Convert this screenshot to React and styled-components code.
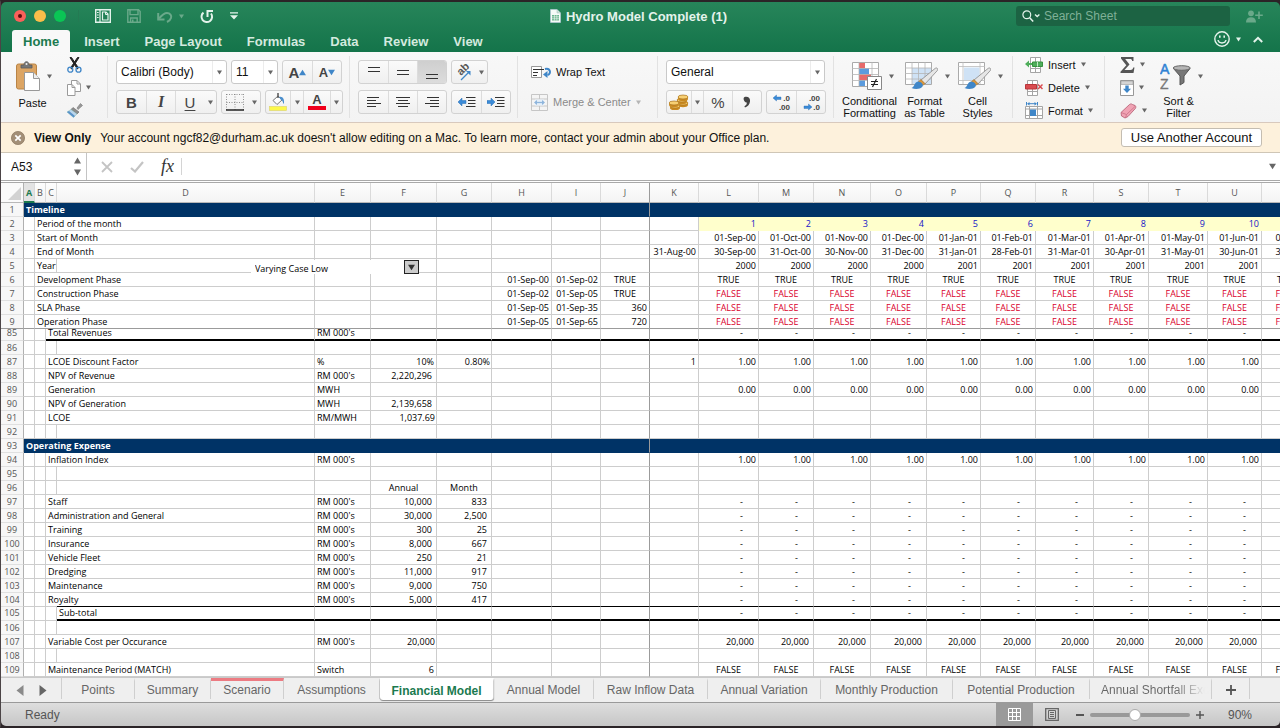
import styled, { createGlobalStyle, css } from "styled-components";

const GlobalStyle = createGlobalStyle`
    * {
        box-sizing: border-box;
    }
    body {
        margin: 0;
        background: #2b2427;
        font-family: "Liberation Sans", Arial, sans-serif;
        font-size: 12px;
        color: #111;
    }
    button, input, select {
        font-family: inherit;
        margin: 0;
        padding: 0;
    }
    button {
        border: none;
        background: none;
        color: inherit;
    }
`;

/* ---------- window ---------- */

const Window = styled.div`
    min-height: 100vh;
    display: flex;
    flex-direction: column;
    border-top: 2px solid #2b2427;
    border-left: 1px solid #4b4446;
    border-bottom: 2px solid #2b2427;
    overflow: hidden;
`;

const Header = styled.header`
    background: linear-gradient(#27855a, #14744a);
    border-radius: 5px 5px 0 0;
    color: #e4f3eb;
`;

const TitleBar = styled.div`
    display: grid;
    grid-template-columns: 1fr auto 1fr;
    align-items: center;
    height: 28px;
    padding: 0 17px 0 13px;
`;

const Tools = styled.div`
    display: flex;
    align-items: center;
    gap: 16px;
`;

const Lights = styled.div`
    display: flex;
    gap: 8px;
    padding-right: 12px;
    border-right: 1px solid #247a53;
`;

const Light = styled.button`
    display: flex;
    align-items: center;
    justify-content: center;
    width: 12px;
    height: 12px;
    border-radius: 50%;
    background: ${(p) => p.$color};
    &::after {
        content: "";
        width: 4px;
        height: 4px;
        border-radius: 50%;
        background: ${(p) => p.$dot || "transparent"};
    }
`;

const ToolButton = styled.button`
    display: flex;
    align-items: center;
    gap: 6px;
    color: ${(p) => (p.$off ? "#6aa98a" : "#e4f3eb")};
`;

const Title = styled.h1`
    display: flex;
    align-items: center;
    gap: 5px;
    margin: 0;
    font-size: 13px;
    font-weight: bold;
`;

const TitleEnd = styled.div`
    display: flex;
    align-items: center;
    justify-content: flex-end;
    gap: 16px;
`;

const Search = styled.label`
    display: flex;
    align-items: center;
    gap: 4px;
    width: 214px;
    height: 20px;
    padding: 0 6px;
    border-radius: 3px;
    background: #1c6343;
`;

const SearchInput = styled.input`
    flex: 1;
    min-width: 0;
    border: none;
    outline: none;
    background: transparent;
    color: #fff;
    font-size: 12px;
    &::placeholder {
        color: #7fb097;
        opacity: 1;
    }
`;

const TabRow = styled.nav`
    display: flex;
    align-items: flex-end;
    gap: 3px;
    height: 22px;
    padding: 0 17px 0 11px;
`;

const RibbonTab = styled.button`
    height: 22px;
    padding: 0 11px;
    border-radius: 3px 3px 0 0;
    font-size: 13px;
    font-weight: bold;
    background: ${(p) => (p.$active ? "#f8f8f8" : "transparent")};
    color: ${(p) => (p.$active ? "#1b7a4f" : "#d4eadf")};
`;

const TabRowEnd = styled.div`
    display: flex;
    align-items: center;
    gap: 12px;
    height: 22px;
    margin-left: auto;
    padding-bottom: 4px;
`;

/* ---------- ribbon ---------- */

const Ribbon = styled.section`
    display: flex;
    height: 71px;
    padding: 4px 0;
    background: linear-gradient(#f8f8f8, #f3f3f3);
    border-bottom: 1px solid #d8c9bd;
    font-size: 11px;
    color: #111;
`;

const Group = styled.div`
    flex: none;
    display: flex;
    gap: ${(p) => p.$gap || 0}px;
    width: ${(p) => p.$width}px;
    padding: 4px 0 0 ${(p) => p.$pad ?? 8}px;
    border-right: 1px solid ${(p) => (p.$last ? "transparent" : "#e2e2e2")};
`;

const Stack = styled.div`
    display: flex;
    flex-direction: column;
    gap: 6px;
`;

const Line = styled.div`
    display: flex;
    gap: 4px;
    height: 24px;
`;

const SelectBox = styled.div`
    display: grid;
    align-items: center;
    width: ${(p) => p.$width}px;
    height: 24px;
    border: 1px solid #c9c9c9;
    border-radius: 3px;
    background: #fff;
`;

const Select = styled.select`
    grid-area: 1 / 1;
    width: 100%;
    height: 22px;
    padding-left: 4px;
    border: none;
    appearance: none;
    background: transparent;
    color: #111;
    font-size: 12px;
`;

const SelectArrow = styled.span`
    grid-area: 1 / 1;
    justify-self: end;
    display: flex;
    align-items: center;
    justify-content: center;
    width: 14px;
    height: 22px;
    border-left: 1px solid #ececec;
    pointer-events: none;
`;

const Segments = styled.div`
    display: flex;
    height: 24px;
    border: 1px solid #d2d2d2;
    border-radius: 3px;
    overflow: hidden;
    background: linear-gradient(#fafafa, #efefef);
`;

const Segment = styled.button`
    display: flex;
    align-items: center;
    justify-content: center;
    width: ${(p) => p.$width || 29}px;
    background: ${(p) => (p.$pressed ? "linear-gradient(#cfcfcf, #dcdcdc)" : "transparent")};
    border-left: 1px solid ${(p) => (p.$joined ? "transparent" : "#dcdcdc")};
    color: #444;
    font-size: ${(p) => p.$size || 15}px;
    &:first-child {
        border-left: none;
    }
`;

const Glyph = styled.span`
    font-weight: ${(p) => (p.$bold ? "bold" : "normal")};
    font-style: ${(p) => (p.$italic ? "italic" : "normal")};
    font-family: ${(p) => (p.$serif ? '"Liberation Serif", serif' : "inherit")};
    text-decoration: ${(p) => (p.$underline ? "underline" : "none")};
    text-underline-offset: 2px;
`;

const BigButton = styled.button`
    flex: none;
    display: flex;
    flex-direction: column;
    align-items: center;
    justify-content: space-between;
    height: 59px;
    font-size: 11px;
    line-height: 12px;
`;

const BigIcon = styled.span`
    display: flex;
    align-items: center;
    gap: 7px;
    height: 32px;
    padding-left: ${(p) => p.$inset ?? 6}px;
`;

const BigLabel = styled.span`
    display: flex;
    align-items: center;
    height: 24px;
    padding-bottom: ${(p) => (p.$single ? 8 : 0)}px;
`;

const SmallButton = styled.button`
    flex: none;
    display: flex;
    align-items: center;
    gap: 5px;
    height: ${(p) => p.$height || 23}px;
    font-size: 11px;
    color: ${(p) => (p.$off ? "#8b8b8b" : "#111")};
`;

const SmallStack = styled.div`
    display: flex;
    flex-direction: column;
    margin-top: -7px;
`;

/* ---------- banner and formula bar ---------- */

const Banner = styled.div`
    display: flex;
    align-items: center;
    gap: 9px;
    height: 30px;
    padding: 0 18px 0 10px;
    background: #fdf1dc;
    border-bottom: 1px solid #cfc6b6;
    font-size: 12px;
    white-space: nowrap;
`;

const BannerButton = styled.button`
    width: 141px;
    height: 19px;
    margin-left: auto;
    border: 1px solid #c4bdb1;
    border-radius: 3px;
    background: #fff;
    font-size: 13px;
    line-height: 15px;
`;

const FormulaBar = styled.div`
    display: flex;
    align-items: center;
    height: 27px;
    padding-right: 4px;
    background: #fff;
`;

const NameBox = styled.div`
    display: flex;
    align-items: center;
    width: 86px;
    height: 27px;
    padding: 0 5px 0 10px;
    border-right: 1px solid #c4c4c4;
`;

const NameInput = styled.input`
    flex: 1;
    min-width: 0;
    border: none;
    outline: none;
    color: #111;
    font-size: 12px;
`;

const FormulaTools = styled.div`
    display: flex;
    align-items: center;
    gap: 17px;
    width: 94px;
    padding-left: 14px;
`;

const Fx = styled.span`
    font-family: "Liberation Serif", serif;
    font-style: italic;
    font-size: 18px;
    color: #333;
`;

const FormulaInput = styled.input`
    flex: 1;
    height: 17px;
    border: none;
    border-left: 1px solid #d4d4d4;
    outline: none;
`;

/* ---------- sheet ---------- */

const SheetArea = styled.main`
    position: relative;
    flex: 1;
    overflow: hidden;
    background: #fff;
    border-top: 3px double #a9a9a9;
`;

const Grid = styled.table`
    table-layout: fixed;
    width: 0;
    border-collapse: separate;
    border-spacing: 0;
    font-family: "Open Sans", "Noto Sans", sans-serif;
    font-size: 9px;
`;

const Col = styled.col`
    width: ${(p) => p.$width}px;
`;

const ColHead = styled.th`
    height: 20px;
    padding: 0;
    font-weight: ${(p) => (p.$active ? "bold" : "normal")};
    color: ${(p) => (p.$active ? "#1b7a4f" : "#555")};
    background: ${(p) => (p.$active ? "#e3e3e3" : "linear-gradient(#fdfdfd, #f4f4f4)")};
    border-right: 1px solid ${(p) => (p.$freeze ? "#9b9b9b" : "#dadada")};
    border-bottom: ${(p) => (p.$active ? "2px solid #1b7a4f" : "1px solid #b8b8b8")};
`;

const Corner = styled.th`
    height: 20px;
    padding: 0 2px 2px 0;
    text-align: right;
    vertical-align: bottom;
    line-height: 0;
    background: #fafafa;
    border-right: 1px solid #b0b0b0;
    border-bottom: 1px solid #b8b8b8;
`;

const lineStyles = {
    none: "none",
    grid: "1px solid #cdcdcd",
    freeze: "1px solid #9b9b9b",
    thin: "1px solid #000",
    thick: "2px solid #000",
    navy: "1px solid #003366",
    yellow: "1px solid #ffffcc",
};

const RowHead = styled.th`
    padding: 0;
    font-weight: normal;
    vertical-align: top;
    line-height: ${(p) => p.$text}px;
    color: #555;
    background: #f7f7f7;
    border-right: 1px solid #b0b0b0;
    border-bottom: 1px solid ${(p) => (p.$freeze ? "#9b9b9b" : "#e0e0e0")};
`;

const Cell = styled.td`
    height: ${(p) => p.$height}px;
    padding: 0 ${(p) => p.$pad ?? 2}px 0 2px;
    vertical-align: top;
    line-height: ${(p) => p.$text}px;
    text-align: ${(p) => p.$align || "left"};
    white-space: nowrap;
    color: ${(p) => p.$color || "#000"};
    background: ${(p) => p.$fill || "#fff"};
    border-right: ${(p) => lineStyles[p.$side || "grid"]};
    border-bottom: ${(p) => lineStyles[p.$line || "grid"]};
    ${(p) =>
        p.$bold &&
        css`
            font-weight: bold;
        `}
`;

const CaseBox = styled.div`
    position: absolute;
    left: 250px;
    top: 77px;
    display: flex;
    width: 168px;
    height: 14px;
    background: #fff;
`;

const CaseSelect = styled.select`
    flex: 1;
    height: 14px;
    padding-left: 4px;
    padding-top: 3px;
    border: none;
    appearance: none;
    background: #fff;
    color: #000;
    font-family: "Open Sans", "Noto Sans", sans-serif;
    font-size: 9px;
    line-height: 11px;
`;

const CaseArrow = styled.span`
    display: flex;
    align-items: center;
    justify-content: center;
    width: 15px;
    height: 14px;
    border: 1px solid #222;
    background: #ccc;
    pointer-events: none;
`;

/* ---------- sheet tabs and status ---------- */

const SheetTabs = styled.nav`
    display: flex;
    height: 26px;
    background: #efefef;
    border-top: 1px solid #c9c9c9;
    border-bottom: 1px solid #9a9a9a;
`;

const TabArrows = styled.div`
    flex: none;
    display: flex;
    align-items: center;
    gap: 15px;
    width: 61px;
    height: 21px;
    padding: 3px 0 0 15px;
    border-right: 1px solid #cfcfcf;
`;

const SheetTab = styled.button`
    flex: none;
    width: ${(p) => p.$width}px;
    height: 21px;
    border-right: 1px solid #cfcfcf;
    border-top: 3px solid ${(p) => p.$mark || "transparent"};
    font-size: 12px;
    line-height: 16px;
    color: #666;
    white-space: nowrap;
    ${(p) =>
        p.$active &&
        css`
            height: 22px;
            background: #fff;
            color: #1b7a4f;
            font-weight: bold;
            border-radius: 0 0 3px 3px;
            box-shadow: 0 1px 1px #888;
        `}
    ${(p) =>
        p.$fade &&
        css`
            padding-left: 11px;
            text-align: left;
            overflow: hidden;
            background: linear-gradient(90deg, #666 70%, #eee 95%);
            background-clip: text;
            color: transparent;
        `}
`;

const AddTab = styled.button`
    display: flex;
    align-items: center;
    justify-content: center;
    width: 38px;
    height: 21px;
    padding-top: 3px;
    border-right: 1px solid #cfcfcf;
`;

const Status = styled.footer`
    display: flex;
    align-items: center;
    height: 23px;
    padding: 0 28px 0 24px;
    background: linear-gradient(#dedede, #c6c6c6);
    border-radius: 0 0 5px 5px;
    font-size: 12px;
    color: #555;
`;

const StatusEnd = styled.div`
    display: flex;
    align-items: center;
    height: 23px;
    margin-left: auto;
`;

const ViewButton = styled.button`
    display: flex;
    align-items: center;
    justify-content: center;
    width: 37px;
    height: 23px;
    background: ${(p) => (p.$active ? "#9a9a9a" : "transparent")};
`;

const ZoomButton = styled.button`
    display: flex;
    padding: 0 6px;
`;

const ZoomSlider = styled.input`
    width: 100px;
    height: 14px;
    appearance: none;
    background: transparent;
    &::-webkit-slider-runnable-track {
        height: 4px;
        border-radius: 2px;
        background: #999;
    }
    &::-webkit-slider-thumb {
        appearance: none;
        width: 12px;
        height: 12px;
        margin-top: -4px;
        border-radius: 50%;
        border: 1px solid #aaa;
        background: #fff;
    }
`;

const ZoomValue = styled.span`
    width: 42px;
    text-align: right;
`;

/* ---------- icons ---------- */

const Caret = ({ color = "#666", size = 5, up }) => (
    <svg width={size} height={size} viewBox="0 0 10 10">
        <path d={up ? "M0 9h10L5 1z" : "M0 1h10L5 9z"} fill={color} />
    </svg>
);

const SidebarIcon = () => (
    <svg width="16" height="14" viewBox="0 0 16 14" fill="none" stroke="currentColor">
        <path d="M.7.7h14.6v12.6H.7z" strokeWidth="1.4" />
        <path d="M5 1v12" strokeWidth="1.2" />
        <path d="M2 3.5h1.7M2 6h1.7M2 8.5h1.7" strokeWidth="1" />
        <path d="M7.5 3h3.500l2 2V11H7.5z" strokeWidth="1.2" />
        <path d="M10.500 3v2.500h2.500" strokeWidth="1" />
    </svg>
);

const SaveIcon = () => (
    <svg width="14" height="14" viewBox="0 0 14 14" fill="none" stroke="currentColor" strokeWidth="1.4">
        <path d="M.8.8h10.7l1.7 1.7v10.7H.8z" />
        <path d="M3 1v4.6h8V1M3.6 13V9h6.6v4" />
        <path d="M5 10.5h1.5V13H5z" fill="currentColor" stroke="none" />
    </svg>
);

const UndoIcon = () => (
    <svg width="16" height="13" viewBox="0 0 16 13" fill="none" stroke="currentColor" strokeWidth="2">
        <path d="M2 8.5C5 5 7 3 10 3c3 0 5 2.5 4 5-.5 1.8-2 3-4 4" />
        <path d="M1.200 3v6.400h6.300" />
    </svg>
);

const RedoIcon = () => (
    <svg width="14" height="15" viewBox="0 0 14 15" fill="none" stroke="currentColor" strokeWidth="2">
        <path d="M3.500 3.600A5.300 5.300 0 1 0 11 4.500" />
        <path d="M7.500 8V1.900H13" />
    </svg>
);

const CustomizeIcon = () => (
    <svg width="8" height="8" viewBox="0 0 8 8" fill="currentColor">
        <path d="M0 .3h8v1.300H0zM0 3.300h8L4 7.500z" />
    </svg>
);

const DocIcon = () => (
    <svg width="11" height="14" viewBox="0 0 11 14">
        <path d="M.5.5h6.500l3.500 3.500v9.500H.5z" fill="#f5faf7" stroke="#bcd" strokeWidth=".6" />
        <path d="M7 .5V4h3.500" fill="#cfe3d8" stroke="#9bb" strokeWidth=".5" />
        <path d="M2 6h7v5.500H2z" fill="#6cb58f" />
        <path d="M2 7.800h7M2 9.700h7M4.500 6v5.500M6.800 6v5.500" stroke="#fff" strokeWidth=".5" />
    </svg>
);

const SearchIcon = () => (
    <svg width="18" height="12" viewBox="0 0 18 12" fill="none" stroke="#e4f3eb">
        <circle cx="4.800" cy="4.800" r="3.900" strokeWidth="1.200" />
        <path d="M7.700 7.700l3.500 3.800" strokeWidth="1.500" />
        <path d="M13 4.500l2.200 2 2.200-2" strokeWidth="1.400" />
    </svg>
);

const ShareIcon = () => (
    <svg width="17" height="13" viewBox="0 0 17 13" fill="#6aa98a">
        <circle cx="5" cy="3.300" r="2.900" />
        <path d="M0 12.500C0 9 1.800 7.200 5 7.200s5 1.800 5 5.300z" />
        <path d="M12.200 1.500h1.600v3h3v1.600h-3v3h-1.600v-3h-3V4.500h3z" />
    </svg>
);

const SmileIcon = () => (
    <svg width="16" height="16" viewBox="0 0 16 16" fill="none" stroke="#e4f3eb" strokeWidth="1.400">
        <circle cx="8" cy="8" r="7.200" />
        <path d="M4 9c.7 4 7.300 4 8 0" strokeWidth="1.400" />
        <path d="M5.800 4.500v2.200M10.200 4.500v2.200" strokeWidth="1.600" />
    </svg>
);

const CollapseIcon = () => (
    <svg width="10" height="7" viewBox="0 0 10 7" fill="none" stroke="#e4f3eb" strokeWidth="2">
        <path d="M.8 6L5 1.800 9.200 6" />
    </svg>
);

const PasteIcon = () => (
    <svg width="24" height="30" viewBox="0 0 24 30">
        <rect x=".5" y="3" width="20" height="25" rx="2" fill="#dca564" stroke="#b98446" />
        <path d="M5 7V4h3c0-4.500 5-4.500 5 0h3v3z" fill="#777" stroke="#5a5a5a" strokeWidth=".8" />
        <circle cx="10.500" cy="3" r="1" fill="#f2f2f2" />
        <path d="M8.500 11.500h9l6 6v12h-15z" fill="#fff" stroke="#999" />
        <path d="M17.500 11.500v6h6" fill="#eee" stroke="#999" />
    </svg>
);

const CutIcon = () => (
    <svg width="15" height="16" viewBox="0 0 15 16" fill="none">
        <path d="M3 .5l1.500 0L11.500 11l-1.200 1z" fill="#222" stroke="#222" />
        <path d="M12 .5l-1.500 0L3.500 11l1.200 1z" fill="#222" stroke="#222" />
        <circle cx="3.300" cy="12.700" r="2.500" stroke="#3f86c8" strokeWidth="1.300" />
        <circle cx="11.500" cy="12.700" r="2.500" stroke="#3f86c8" strokeWidth="1.300" />
    </svg>
);

const CopyIcon = () => (
    <svg width="14" height="16" viewBox="0 0 14 16" fill="#fff" stroke="#9a9a9a">
        <path d="M4.500 .5h5.500l3.500 3.500v7.500h-9z" />
        <path d="M10 .5v3.500h3.500" fill="none" />
        <path d="M.5 4.500h4.500l3 3v8H.5z" />
        <path d="M5 4.500v3h3" fill="none" />
    </svg>
);

const BrushIcon = () => (
    <svg width="16" height="15" viewBox="0 0 16 15">
        <path d="M10 5l3.500-4.500 2 2L11 6.500z" fill="#999" stroke="#777" strokeWidth=".6" />
        <path d="M6 4.500L12 9l-2 2-6-4.500z" fill="#8d8d8d" stroke="#666" strokeWidth=".6" />
        <path d="M4 6.500L10 11l-3.500 3.500L0 9z" fill="#bcd6ee" stroke="#7ba" strokeWidth=".4" />
        <path d="M0 9l6.500 5.500 1.500-1.500L2 8z" fill="#5a93c8" />
    </svg>
);

const BordersIcon = () => (
    <svg width="18" height="17" viewBox="0 0 18 17" fill="none" stroke="#777">
        <path d="M.5 .5h17M.5 8.500h17M.5 0v16M9 0v16M17.500 0v16" strokeDasharray="1 1.500" strokeWidth=".8" />
        <path d="M0 16h18" stroke="#222" strokeWidth="1.400" />
    </svg>
);

const FillIcon = () => (
    <svg width="18" height="18" viewBox="0 0 18 18">
        <path d="M4 7.500L9 3l4 4-5 4.500z" fill="#fff" stroke="#777" />
        <path d="M9 0v5" stroke="#555" strokeWidth="1.500" />
        <path d="M10 4c4-1 5.500 2 5 7-1.500-1-1-4-3-4z" fill="#4b8fcd" />
        <rect x=".5" y="13.500" width="17" height="4" fill="#fcf84a" stroke="#ddd36a" strokeWidth=".6" />
    </svg>
);

const FontColorIcon = () => (
    <svg width="18" height="18" viewBox="0 0 18 18">
        <text x="9" y="11" textAnchor="middle" fontSize="13" fontWeight="bold" fill="#444">A</text>
        <rect x="0" y="13" width="18" height="4" fill="#f0001c" />
    </svg>
);

const AlignIcon = ({ lines, top = 3 }) => (
    <svg width="16" height="20" viewBox="0 0 16 20" stroke="#333" strokeWidth="1">
        {lines.map(([x, w], i) => (
            <path key={i} d={`M${x} ${top + i * 3 + 0.5}h${w}`} />
        ))}
    </svg>
);

const ValignIcon = ({ top }) => (
    <svg width="16" height="20" viewBox="0 0 16 20" stroke="#333">
        <path d={`M2 ${top}h12M2 ${top + 4}h12`} />
    </svg>
);

const AngleIcon = () => (
    <svg width="20" height="20" viewBox="0 0 20 20">
        <text x="0" y="0" fontSize="11" fontWeight="bold" fill="#555" transform="translate(8 14) rotate(-45)">ab</text>
        <path d="M8 18l8-8" stroke="#3f86c8" strokeWidth="1.300" />
        <path d="M13 9h4.500v4.500z" fill="#3f86c8" />
    </svg>
);

const IndentIcon = ({ right }) => (
    <svg width="18" height="14" viewBox="0 0 18 14">
        <path
            d={right ? "M8 7L4 3v2.500H0v3h4V11z" : "M0 7l4-4v2.500h4v3H4V11z"}
            fill="#3a8bd8"
            stroke="#2a6cb0"
            strokeWidth=".5"
        />
        <path d="M8 2.500h9.500M10 5.500h7.500M10 8.500h7.500M8 11.500h9.500" stroke="#333" />
    </svg>
);

const WrapIcon = () => (
    <svg width="20" height="14" viewBox="0 0 20 14" fill="none">
        <path d="M.5 1.500h10v11H.5z" fill="#fff" stroke="#999" />
        <path d="M2 4.500h11M2 7.500h5M2 10.500h4" stroke="#333" />
        <path d="M14 4c5.500-1.500 6.500 5 2.500 6" stroke="#3f86c8" strokeWidth="2" />
        <path d="M12 9.500l4.500-3.500v7z" fill="#3f86c8" />
    </svg>
);

const MergeIcon = () => (
    <svg width="17" height="17" viewBox="0 0 17 17" fill="none" stroke="#c6c6c6">
        <path d="M.5.5h16v16H.5zM.5 5h16M.5 12h16M8.500.5V5M8.500 12v4.500" />
        <path d="M4 5.500h9v6H4z" fill="#e6f0fa" stroke="none" />
        <path d="M4 8.500h9" stroke="#8fb5dc" strokeWidth="1.300" />
        <path d="M3 8.500L6 6v5zM14 8.500L11 6v5z" fill="#8fb5dc" stroke="none" />
    </svg>
);

const Coin = ({ x, y }) => (
    <g>
        <path d={`M${x} ${y}v2c0 3 10 3 10 0v-2z`} fill="#c98a22" />
        <ellipse cx={x + 5} cy={y} rx="5" ry="2" fill="#f7cf72" stroke="#a8701a" strokeWidth=".7" />
    </g>
);

const CoinsIcon = () => (
    <svg width="20" height="16" viewBox="0 0 20 16">
        <Coin x={9} y={9} />
        <Coin x={8} y={6} />
        <Coin x={9} y={3} />
        <Coin x={1} y={12} />
        <Coin x={0} y={9} />
    </svg>
);

const CommaIcon = () => (
    <svg width="8" height="12" viewBox="0 0 8 12">
        <path d="M1.500 1C5 0 7.500 2 7 5.500c-.4 3-2 5-5 6l-.6-1.300c1.800-1 2.600-2.200 2.300-3.600C1 6.300-.5 2 1.500 1z" fill="#444" />
    </svg>
);

const DecimalIcon = ({ less }) => (
    <svg width="19" height="18" viewBox="0 0 19 18" fontSize="8" fontWeight="bold">
        <text x="18" y="8" textAnchor="end" fill="#444">{less ? ".00" : ".0"}</text>
        <text x="18" y="17" textAnchor="end" fill="#444">{less ? ".0" : ".00"}</text>
        <path
            d={less ? "M10 14L6.500 11v2H2v2.500h4.500V17z" : "M1 5l3.500-3v2H9v2.500H4.500V8z"}
            fill="#3a8bd8"
            stroke="#2a6cb0"
            strokeWidth=".4"
        />
    </svg>
);

const ConditionalIcon = () => (
    <svg width="30" height="28" viewBox="0 0 30 28">
        <path d="M.5.5h26v24H.5z" fill="#fff" stroke="#aaa" />
        <path d="M7 1h6v5H7zM7 12h12v6H7z" fill="#e66a6a" />
        <path d="M7 6h10v6H7zM7 18h6v6H7z" fill="#5b9bdd" />
        <path d="M7 0v24M20 0v24M0 6.500h27M0 12.500h27M0 18.500h27" stroke="#b5b5b5" strokeWidth=".8" />
        <path d="M15.500 14.500h14v13h-14z" fill="#fff" stroke="#888" />
        <path d="M19 19.500h7M19 22.500h7M24.500 17l-4 8" stroke="#222" strokeWidth="1.200" />
    </svg>
);

const BigBrush = () => (
    <g>
        <path d="M30 6.500c2-1.500 3.500.5 2.200 2.200L20 22l-4-4z" fill="#e6e6e6" stroke="#888" strokeWidth=".8" />
        <path d="M16 17.500l4 4-2 2-4.500-4z" fill="#d9973d" stroke="#9b6a26" strokeWidth=".5" />
        <path d="M13 19.500c3 0 6 3 4.500 5C15 27.500 10 27.500 6.500 26c3-1 3-6 6.500-6.500z" fill="#3f86c8" />
    </g>
);

const TableStyleIcon = () => (
    <svg width="33" height="28" viewBox="0 0 33 28">
        <path d="M.5.5h26v22H.5z" fill="#fff" stroke="#aaa" />
        <path d="M7 6h19v16H7z" fill="#cfe2f5" />
        <path d="M7 0v22M13.500 0v22M20 0v22M0 6h27M0 11.500h27M0 17h27" stroke="#b5b5b5" strokeWidth=".8" />
        <BigBrush />
    </svg>
);

const CellStyleIcon = () => (
    <svg width="33" height="28" viewBox="0 0 33 28">
        <path d="M.5.5h26v22H.5z" fill="#fff" stroke="#aaa" />
        <path d="M5 0v22M22 0v22M0 4.500h27M0 18.500h27" stroke="#bbb" strokeWidth=".8" />
        <path d="M6 5.500h15.500v12.500H6z" fill="#cfe2f5" />
        <BigBrush />
    </svg>
);

const InsertCellsIcon = () => (
    <svg width="18" height="16" viewBox="0 0 18 16" fill="#fff" stroke="#a5a5a5">
        <path d="M5.500.5h10v15h-10zM10.500.5v15M5.500 11.500h10" />
        <path d="M7.500 5h10v4.500h-10z" fill="#4fae5b" stroke="#37903f" />
        <path d="M12.500 5v4.500" stroke="#c5e8c8" />
        <path d="M0 7l4-3.500V6h3v2H4v2.500z" fill="#4fae5b" stroke="none" />
    </svg>
);

const DeleteCellsIcon = () => (
    <svg width="18" height="16" viewBox="0 0 18 16" fill="#fff" stroke="#a5a5a5">
        <path d="M2.500.5h10v15h-10zM7.500.5v15M2.500 11.500h10" />
        <path d="M.5 4.500h11V9H.5z" fill="#d94b50" stroke="#b8353a" />
        <path d="M13 4.500l4.500 4.500M17.500 4.500L13 9" stroke="#d94b50" strokeWidth="1.500" />
    </svg>
);

const FormatCellsIcon = () => (
    <svg width="18" height="17" viewBox="0 0 18 17" fill="#fff" stroke="#a5a5a5">
        <path d="M.5 4.500h17v12H.5zM4.500 4.500v12M12.500 4.500v12M.5 13.500h17M.5 7h17" />
        <path d="M5 7.500h6v6.500H5z" fill="#3f86c8" stroke="none" />
        <path d="M1.500 0v3.500M12.500 0v3.500M3 1.700h8" stroke="#3f86c8" />
        <path d="M2 1.700L4.500 0v3.400zM12 1.700L9.500 0v3.400z" fill="#3f86c8" stroke="none" />
    </svg>
);

const SigmaIcon = () => (
    <svg width="15" height="16" viewBox="0 0 15 16">
        <path d="M1 0h12.500v4h-1.300c-.2-1.500-.8-2-2.200-2H5.200L9.500 7.500 4.500 13h6c1.500 0 2.300-.7 2.700-2.500h1.300L13.500 16H.5v-1.200L6.300 8.300 1 1.500z" fill="#555" />
    </svg>
);

const FillDownIcon = () => (
    <svg width="14" height="16" viewBox="0 0 14 16">
        <path d="M.5.5h13v15H.5z" fill="#fff" stroke="#999" />
        <path d="M1 1h12v3.500H1z" fill="#d4d4d4" stroke="#999" strokeWidth=".6" />
        <path d="M5.300 5.500h3.400v3.200H11L7 13 3 8.700h2.300z" fill="#3f86c8" />
    </svg>
);

const EraserIcon = () => (
    <svg width="17" height="16" viewBox="0 0 17 16">
        <path d="M1 9.500L9.500 1.500c1-.8 2-.8 3 0l2.500 1c1 .8 1 1.800.5 2.800L8 13.500 5 15 1.500 13z" fill="#f0a3b4" stroke="#b35a70" strokeWidth=".8" />
        <path d="M1 9.500l5.500 2L15.500 3M6.500 11.500L5.500 15" fill="none" stroke="#c97085" strokeWidth=".8" />
    </svg>
);

const SortIcon = () => (
    <svg width="31" height="32" viewBox="0 0 31 32">
        <text x="0" y="14" fontSize="14" fill="#2f82d4" stroke="#2f82d4" strokeWidth=".5">A</text>
        <text x="0" y="29" fontSize="14" fill="#777" stroke="#777" strokeWidth=".3">Z</text>
        <path d="M13.500 8.500L20 16v9l4-2.500V16l6-7.500z" fill="#777" stroke="#555" />
        <ellipse cx="21.700" cy="8" rx="8.500" ry="2.300" fill="#b5b5b5" stroke="#666" />
    </svg>
);

const CloseCircleIcon = () => (
    <svg width="14" height="14" viewBox="0 0 14 14">
        <circle cx="7" cy="7" r="6.600" fill="#a38f77" stroke="#8a765e" strokeWidth=".7" />
        <path d="M4.300 4.300l5.400 5.400M9.700 4.300L4.300 9.700" stroke="#fff" strokeWidth="1.700" />
    </svg>
);

const CancelIcon = () => (
    <svg width="12" height="12" viewBox="0 0 12 12" stroke="#c4c4c4" strokeWidth="1.800">
        <path d="M1 1l10 10M11 1L1 11" />
    </svg>
);

const AcceptIcon = () => (
    <svg width="14" height="12" viewBox="0 0 14 12" fill="none" stroke="#c4c4c4" strokeWidth="2.200">
        <path d="M1 7l4 3.500L13 1" />
    </svg>
);

const SideArrow = ({ right }) => (
    <svg width="8" height="11" viewBox="0 0 8 11">
        <path d={right ? "M.5 0v11L7.500 5.500z" : "M7.500 0v11L.5 5.500z"} fill={right ? "#666" : "#8a8a8a"} />
    </svg>
);

const PlusIcon = ({ size = 10, color = "#555" }) => (
    <svg width={size} height={size} viewBox="0 0 10 10" stroke={color} strokeWidth="1.800">
        <path d="M0 5h10M5 0v10" />
    </svg>
);

const MinusIcon = () => (
    <svg width="8" height="8" viewBox="0 0 8 8" stroke="#555" strokeWidth="2">
        <path d="M0 4h8" />
    </svg>
);

const NormalViewIcon = () => (
    <svg width="13" height="13" viewBox="0 0 13 13" fill="none" stroke="#fff">
        <path d="M.5.5h12v12H.5zM.5 4.500h12M.5 8.500h12M4.500.5v12M8.500.5v12" />
    </svg>
);

const PageViewIcon = () => (
    <svg width="14" height="13" viewBox="0 0 14 13" fill="none" stroke="#666">
        <path d="M.7.7h12.600v11.600H.7z" strokeWidth="1.300" />
        <path d="M3.500 2.500h7v8h-7z" />
        <path d="M5 4.500h4M5 6.500h4M5 8.500h4" />
    </svg>
);

/* ---------- data ---------- */

const columns = [
    ["A", 11], ["B", 11], ["C", 11], ["D", 258], ["E", 56], ["F", 66], ["G", 55],
    ["H", 60], ["I", 49], ["J", 49], ["K", 49], ["L", 60], ["M", 55], ["N", 57],
    ["O", 56], ["P", 54], ["Q", 55], ["R", 58], ["S", 55], ["T", 59], ["U", 54], ["V", 53],
];

const MONTHS = 11;
const every = (value) => Array(MONTHS).fill(value);
const date = (value) => ({ value, align: "right" });
const acct = (value) => ({ value, align: "right", pad: 4 });
const tight = (value) => ({ value, align: "right", pad: 1 });
const mid = (value) => ({ value, align: "center" });
const dash = { value: "-", align: "right", pad: 15 };
const no = { value: "FALSE", align: "center", color: "#d9002b" };
const RM = "RM 000's";

const starts = ["01-Sep-00", "01-Oct-00", "01-Nov-00", "01-Dec-00", "01-Jan-01", "01-Feb-01", "01-Mar-01", "01-Apr-01", "01-May-01", "01-Jun-01", "01-Jul-01"];
const ends = ["30-Sep-00", "31-Oct-00", "30-Nov-00", "31-Dec-00", "31-Jan-01", "28-Feb-01", "31-Mar-01", "30-Apr-01", "31-May-01", "30-Jun-01", "31-Jul-01"];
const years = [2000, 2000, 2000, 2000, 2001, 2001, 2001, 2001, 2001, 2001, 2001];

const cost = (n, label, annual, month) => ({
    n, at: 2, label, e: RM, f: acct(annual), g: acct(month), months: every(dash),
});

// "at" is the index of the column the label starts in; the label runs on to column D
const rows = [
    { n: 1, band: "Timeline" },
    {
        n: 2, at: 1, label: "Period of the month",
        months: years.map((_, i) => ({ value: i + 1, align: "right", color: "#1414c8", fill: "#ffffcc", side: "yellow", line: "yellow" })),
    },
    { n: 3, at: 1, label: "Start of Month", months: starts.map(date) },
    { n: 4, at: 1, label: "End of Month", k: date("31-Aug-00"), months: ends.map(date) },
    { n: 5, at: 1, label: "Year", short: true, months: years.map(date) },
    { n: 6, at: 1, label: "Development Phase", h: date("01-Sep-00"), i: date("01-Sep-02"), j: mid("TRUE"), months: every(mid("TRUE")) },
    { n: 7, at: 1, label: "Construction Phase", h: date("01-Sep-02"), i: date("01-Sep-05"), j: mid("TRUE"), months: every(no) },
    { n: 8, at: 1, label: "SLA Phase", h: date("01-Sep-05"), i: date("01-Sep-35"), j: date("360"), months: every(no) },
    { n: 9, at: 1, label: "Operation Phase", line: "freeze", h: date("01-Sep-05"), i: date("01-Sep-65"), j: date("720"), months: every(no) },
    { n: 85, at: 2, label: "Total Revenues", e: RM, height: 12, text: 8, line: "thick", months: every(dash) },
    { n: 86 },
    { n: 87, at: 2, label: "LCOE Discount Factor", e: "%", f: date("10%"), g: tight("0.80%"), k: date("1"), months: every(date("1.00")) },
    { n: 88, at: 2, label: "NPV of Revenue", e: RM, f: acct("2,220,296") },
    { n: 89, at: 2, label: "Generation", e: "MWH", months: every(date("0.00")) },
    { n: 90, at: 2, label: "NPV of Generation", e: "MWH", f: acct("2,139,658") },
    { n: 91, at: 2, label: "LCOE", e: "RM/MWH", f: tight("1,037.69") },
    { n: 92 },
    { n: 93, band: "Operating Expense" },
    { n: 94, at: 2, label: "Inflation Index", e: RM, months: every(date("1.00")) },
    { n: 95 },
    { n: 96, f: mid("Annual"), g: mid("Month") },
    cost(97, "Staff", "10,000", "833"),
    cost(98, "Administration and General", "30,000", "2,500"),
    cost(99, "Training", "300", "25"),
    cost(100, "Insurance", "8,000", "667"),
    cost(101, "Vehicle Fleet", "250", "21"),
    cost(102, "Dredging", "11,000", "917"),
    cost(103, "Maintenance", "9,000", "750"),
    { ...cost(104, "Royalty", "5,000", "417"), line: "thin", split: true },
    { n: 105, at: 3, label: "Sub-total", text: 12, line: "thick", months: every(dash) },
    { n: 106 },
    { n: 107, at: 2, label: "Variable Cost per Occurance", e: RM, f: tight("20,000"), months: every(acct("20,000")) },
    { n: 108 },
    { n: 109, at: 2, label: "Maintenance Period (MATCH)", e: "Switch", f: date("6"), months: every(mid("FALSE")) },
];

const sheetTabs = [
    { name: "Points", width: 73 },
    { name: "Summary", width: 76 },
    { name: "Scenario", width: 73, mark: "#ec7b82" },
    { name: "Assumptions", width: 96 },
    { name: "Financial Model", width: 114, active: true },
    { name: "Annual Model", width: 100 },
    { name: "Raw Inflow Data", width: 114 },
    { name: "Annual Variation", width: 113 },
    { name: "Monthly Production", width: 132 },
    { name: "Potential Production", width: 137 },
    { name: "Annual Shortfall Exceedance", width: 122, fade: true },
];

const ribbonTabs = ["Home", "Insert", "Page Layout", "Formulas", "Data", "Review", "View"];

/* ---------- parts ---------- */

const DropDown = ({ label, value, width }) => (
    <SelectBox $width={width}>
        <Select aria-label={label} defaultValue={value}>
            <option>{value}</option>
        </Select>
        <SelectArrow>
            <Caret />
        </SelectArrow>
    </SelectBox>
);

const Big = ({ icon, lines }) => (
    <BigButton>
        <BigIcon>
            {icon}
            <Caret />
        </BigIcon>
        <BigLabel>
            <span>
                {lines[0]}
                <br />
                {lines[1]}
            </span>
        </BigLabel>
    </BigButton>
);

const SheetRow = ({ row }) => {
    const height = row.height || 14;
    const text = row.text || height - 1;
    const size = { $height: height, $text: text };
    if (row.band) {
        return (
            <tr>
                <RowHead scope="row" $text={text}>{row.n}</RowHead>
                <Cell {...size} colSpan={10} $bold $color="#fff" $fill="#003366" $line="navy" $side="freeze">
                    {row.band}
                </Cell>
                <Cell {...size} colSpan={12} $fill="#003366" $line="navy" />
            </tr>
        );
    }

    const at = row.at ?? 4;
    const heavy = row.line === "thick" || row.line === "thin";
    const lead = [];
    for (let i = 0; i < at; i++) {
        lead.push(<Cell key={i} {...size} $line={heavy ? "grid" : row.line} />);
    }
    const body = [
        { value: row.e }, row.f, row.g, row.h, row.i, { side: "freeze", ...row.j }, row.k,
        ...(row.months || every(null)),
    ];

    return (
        <tr>
            <RowHead scope="row" $text={text} $freeze={row.line === "freeze"}>{row.n}</RowHead>
            {lead}
            {row.short && (
                <>
                    <Cell {...size} colSpan={2}>{row.label}</Cell>
                    <Cell {...size} />
                </>
            )}
            {row.split && (
                <>
                    <Cell {...size} $side="none">{row.label}</Cell>
                    <Cell {...size} $line={row.line} />
                </>
            )}
            {row.label && !row.short && !row.split && (
                <Cell {...size} colSpan={4 - at} $line={row.line}>
                    {row.label}
                </Cell>
            )}
            {body.map((cell, i) => (
                <Cell
                    key={i}
                    {...size}
                    $line={cell?.line || row.line}
                    $align={cell?.align}
                    $pad={cell?.pad}
                    $color={cell?.color}
                    $fill={cell?.fill}
                    $side={cell?.side}
                >
                    {cell?.value}
                </Cell>
            ))}
        </tr>
    );
};

const App = () => {
    return (
        <>
            <GlobalStyle />
            <Window>
                <Header>
                    <TitleBar>
                        <Tools>
                            <Lights>
                                <Light $color="#f9605a" $dot="#5c0b0b" aria-label="Close" />
                                <Light $color="#fbbd4a" aria-label="Minimize" />
                                <Light $color="#0ac655" aria-label="Full screen" />
                            </Lights>
                            <ToolButton aria-label="Sidebar"><SidebarIcon /></ToolButton>
                            <ToolButton $off aria-label="Save"><SaveIcon /></ToolButton>
                            <ToolButton $off aria-label="Undo">
                                <UndoIcon />
                                <Caret color="#6aa98a" />
                            </ToolButton>
                            <ToolButton aria-label="Redo"><RedoIcon /></ToolButton>
                            <ToolButton aria-label="Customize"><CustomizeIcon /></ToolButton>
                        </Tools>
                        <Title>
                            <DocIcon />
                            Hydro Model Complete (1)
                        </Title>
                        <TitleEnd>
                            <Search>
                                <SearchIcon />
                                <SearchInput aria-label="Search Sheet" placeholder="Search Sheet" />
                            </Search>
                            <ToolButton $off aria-label="Share"><ShareIcon /></ToolButton>
                        </TitleEnd>
                    </TitleBar>
                    <TabRow>
                        {ribbonTabs.map((tab) => (
                            <RibbonTab key={tab} $active={tab === "Home"}>{tab}</RibbonTab>
                        ))}
                        <TabRowEnd>
                            <ToolButton aria-label="Feedback">
                                <SmileIcon />
                                <Caret color="#e4f3eb" />
                            </ToolButton>
                            <ToolButton aria-label="Collapse ribbon"><CollapseIcon /></ToolButton>
                        </TabRowEnd>
                    </TabRow>
                </Header>

                <Ribbon>
                    <Group $width={107} $pad={12} $gap={15}>
                        <BigButton>
                            <BigIcon $inset={3}>
                                <PasteIcon />
                                <Caret />
                            </BigIcon>
                            <BigLabel $single>Paste</BigLabel>
                        </BigButton>
                        <SmallStack>
                            <SmallButton aria-label="Cut"><CutIcon /></SmallButton>
                            <SmallButton aria-label="Copy"><CopyIcon /><Caret /></SmallButton>
                            <SmallButton aria-label="Format painter"><BrushIcon /></SmallButton>
                        </SmallStack>
                    </Group>

                    <Group $width={242}>
                        <Stack>
                            <Line>
                                <DropDown label="Font" value="Calibri (Body)" width={111} />
                                <DropDown label="Font size" value="11" width={47} />
                                <Segments>
                                    <Segment aria-label="Grow font">
                                        <Glyph $bold>A</Glyph><Caret size={7} up color="#3f86c8" />
                                    </Segment>
                                    <Segment $size={13} aria-label="Shrink font">
                                        <Glyph $bold>A</Glyph><Caret size={7} color="#3f86c8" />
                                    </Segment>
                                </Segments>
                            </Line>
                            <Line>
                                <Segments>
                                    <Segment><Glyph $bold>B</Glyph></Segment>
                                    <Segment $size={16}><Glyph $bold $italic $serif>I</Glyph></Segment>
                                    <Segment><Glyph $underline>U</Glyph></Segment>
                                    <Segment $width={12} $joined aria-label="Underline style"><Caret /></Segment>
                                </Segments>
                                <Segments>
                                    <Segment $width={26} aria-label="Borders"><BordersIcon /></Segment>
                                    <Segment $width={12} $joined aria-label="Border style"><Caret /></Segment>
                                </Segments>
                                <Segments>
                                    <Segment $width={24} aria-label="Fill color"><FillIcon /></Segment>
                                    <Segment $width={13} aria-label="Fill colors"><Caret /></Segment>
                                    <Segment $width={27} aria-label="Font color"><FontColorIcon /></Segment>
                                    <Segment $width={12} aria-label="Font colors"><Caret /></Segment>
                                </Segments>
                            </Line>
                        </Stack>
                    </Group>

                    <Group $width={168}>
                        <Stack>
                            <Line>
                                <Segments>
                                    <Segment aria-label="Align top"><ValignIcon top={5.5} /></Segment>
                                    <Segment aria-label="Align middle"><ValignIcon top={8.5} /></Segment>
                                    <Segment $pressed aria-label="Align bottom"><ValignIcon top={12.5} /></Segment>
                                </Segments>
                                <Segments>
                                    <Segment $width={22} aria-label="Orientation"><AngleIcon /></Segment>
                                    <Segment $width={13} $joined aria-label="Orientation options"><Caret /></Segment>
                                </Segments>
                            </Line>
                            <Line>
                                <Segments>
                                    <Segment aria-label="Align left"><AlignIcon top={5} lines={[[1, 12], [1, 9], [1, 14], [1, 9]]} /></Segment>
                                    <Segment aria-label="Align center"><AlignIcon top={5} lines={[[1, 14], [3, 10], [1, 14], [3, 10]]} /></Segment>
                                    <Segment aria-label="Align right"><AlignIcon top={5} lines={[[3, 12], [6, 9], [1, 14], [6, 9]]} /></Segment>
                                </Segments>
                                <Segments>
                                    <Segment aria-label="Decrease indent"><IndentIcon /></Segment>
                                    <Segment aria-label="Increase indent"><IndentIcon right /></Segment>
                                </Segments>
                            </Line>
                        </Stack>
                    </Group>

                    <Group $width={140} $pad={13}>
                        <Stack>
                            <SmallButton $height={24}><WrapIcon />Wrap Text</SmallButton>
                            <SmallButton $height={24} $off>
                                <MergeIcon />Merge &amp; Center <Caret color="#b5b5b5" />
                            </SmallButton>
                        </Stack>
                    </Group>

                    <Group $width={176}>
                        <Stack>
                            <DropDown label="Number format" value="General" width={159} />
                            <Line>
                                <Segments>
                                    <Segment $width={24} aria-label="Currency"><CoinsIcon /></Segment>
                                    <Segment $width={12} aria-label="Currencies"><Caret /></Segment>
                                    <Segment>%</Segment>
                                    <Segment aria-label="Comma style"><CommaIcon /></Segment>
                                </Segments>
                                <Segments>
                                    <Segment aria-label="Increase decimal"><DecimalIcon /></Segment>
                                    <Segment aria-label="Decrease decimal"><DecimalIcon less /></Segment>
                                </Segments>
                            </Line>
                        </Stack>
                    </Group>

                    <Group $width={179} $pad={8} $gap={2}>
                        <Big icon={<ConditionalIcon />} lines={["Conditional", "Formatting"]} />
                        <Big icon={<TableStyleIcon />} lines={["Format", "as Table"]} />
                        <Big icon={<CellStyleIcon />} lines={["Cell", "Styles"]} />
                    </Group>

                    <Group $width={92} $pad={12}>
                        <SmallStack>
                            <SmallButton><InsertCellsIcon />Insert <Caret /></SmallButton>
                            <SmallButton><DeleteCellsIcon />Delete <Caret /></SmallButton>
                            <SmallButton><FormatCellsIcon />Format <Caret /></SmallButton>
                        </SmallStack>
                    </Group>

                    <Group $width={110} $pad={15} $gap={7} $last>
                        <SmallStack>
                            <SmallButton aria-label="AutoSum"><SigmaIcon /><Caret /></SmallButton>
                            <SmallButton aria-label="Fill"><FillDownIcon /><Caret /></SmallButton>
                            <SmallButton aria-label="Clear"><EraserIcon /><Caret /></SmallButton>
                        </SmallStack>
                        <Big icon={<SortIcon />} lines={["Sort &", "Filter"]} />
                    </Group>
                </Ribbon>

                <Banner>
                    <CloseCircleIcon />
                    <b>View Only</b>
                    <span>
                        Your account ngcf82@durham.ac.uk doesn't allow editing on a Mac. To learn more, contact your
                        admin about your Office plan.
                    </span>
                    <BannerButton>Use Another Account</BannerButton>
                </Banner>

                <FormulaBar>
                    <NameBox>
                        <NameInput aria-label="Name box" defaultValue="A53" />
                        <svg width="7" height="19" viewBox="0 0 7 19" fill="#666">
                            <path d="M0 6.500h7L3.500.5zM0 12.500h7l-3.500 6z" />
                        </svg>
                    </NameBox>
                    <FormulaTools>
                        <CancelIcon />
                        <AcceptIcon />
                        <Fx>fx</Fx>
                    </FormulaTools>
                    <FormulaInput aria-label="Formula" />
                    <Caret size={7} />
                </FormulaBar>

                <SheetArea>
                    <Grid>
                        <colgroup>
                            <Col $width={23} />
                            {columns.map(([name, width]) => (
                                <Col key={name} $width={width} />
                            ))}
                        </colgroup>
                        <thead>
                            <tr>
                                <Corner aria-label="Select all">
                                    <svg width="13" height="13" viewBox="0 0 13 13">
                                        <path d="M13 0v13H0z" fill="#d2d2d2" />
                                    </svg>
                                </Corner>
                                {columns.map(([name]) => (
                                    <ColHead key={name} scope="col" $active={name === "A"} $freeze={name === "J"}>
                                        {name}
                                    </ColHead>
                                ))}
                            </tr>
                        </thead>
                        <tbody>
                            {rows.map((row) => (
                                <SheetRow key={row.n} row={row} />
                            ))}
                        </tbody>
                    </Grid>
                    <CaseBox>
                        <CaseSelect aria-label="Case" defaultValue="Varying Case Low">
                            <option>Varying Case Low</option>
                        </CaseSelect>
                        <CaseArrow>
                            <Caret size={7} color="#333" />
                        </CaseArrow>
                    </CaseBox>
                </SheetArea>

                <SheetTabs>
                    <TabArrows>
                        <SideArrow />
                        <SideArrow right />
                    </TabArrows>
                    {sheetTabs.map((tab) => (
                        <SheetTab key={tab.name} $width={tab.width} $mark={tab.mark} $active={tab.active} $fade={tab.fade}>
                            {tab.name}
                        </SheetTab>
                    ))}
                    <AddTab aria-label="Add sheet"><PlusIcon /></AddTab>
                </SheetTabs>

                <Status>
                    Ready
                    <StatusEnd>
                        <ViewButton $active aria-label="Normal view"><NormalViewIcon /></ViewButton>
                        <ViewButton aria-label="Page layout view"><PageViewIcon /></ViewButton>
                        <ZoomButton aria-label="Zoom out"><MinusIcon /></ZoomButton>
                        <ZoomSlider type="range" aria-label="Zoom" min="10" max="190" defaultValue="90" />
                        <ZoomButton aria-label="Zoom in"><PlusIcon size={8} /></ZoomButton>
                        <ZoomValue>90%</ZoomValue>
                    </StatusEnd>
                </Status>
            </Window>
        </>
    );
};

export default App;
